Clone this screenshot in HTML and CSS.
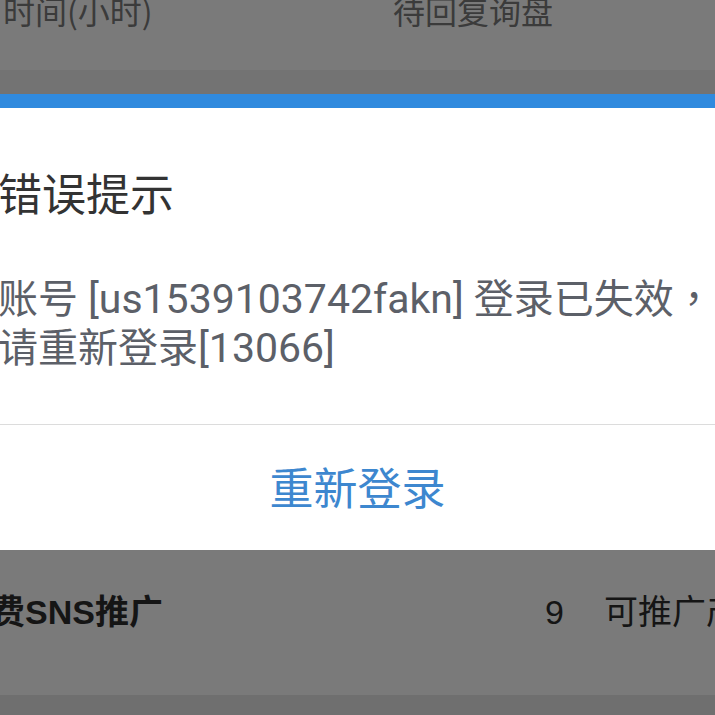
FILE: index.html
```html
<!DOCTYPE html>
<html lang="zh-CN">
<head>
    <meta charset="UTF-8">
    <meta name="viewport" content="width=device-width, initial-scale=1.0">
    <title>错误提示</title>
    <link rel="stylesheet" href="styles.css">
</head>
<body>
    <div class="table-head">
        <span class="head-col head-time">时间(小时)</span>
        <span class="head-col">待回复询盘</span>
    </div>
    <div class="head-shadow"></div>

    <div class="dialog">
        <div class="dialog-bar"></div>
        <div class="dialog-body">
            <h2 class="dialog-title">错误提示</h2>
            <p class="dialog-message">账号 <span class="code">[us1539103742fakn]</span> 登录已失效<span class="punct" lang="zh-TW">，</span>请重新登录<span class="code">[13066]</span></p>
        </div>
        <button class="dialog-action">重新登录</button>
    </div>

    <div class="stat-row">
        <span class="stat-name">费SNS推广</span>
        <span class="stat-count">9</span>
        <span class="stat-label">可推广产品</span>
    </div>
    <div class="stat-next"></div>
</body>
</html>
```

FILE: styles.css
```css
* {
    margin: 0;
    padding: 0;
    box-sizing: border-box;
}

:root {
    --overlay: #7a7a7a;
    --overlay-dark: #737373;
    --bar-blue: #308ade;
    --action-blue: #3d87cf;
    --title: #333333;
    --message: #5c6068;
}

body {
    width: 715px;
    height: 715px;
    overflow: hidden;
    background-color: var(--overlay);
    font-family: Roboto, "Noto Sans CJK SC", sans-serif;
}

.table-head {
    display: flex;
    height: 70px;
    color: #3b3b3b;
    font-family: "Noto Sans CJK SC", sans-serif;
    font-size: 32px;
    line-height: 30px;
    white-space: nowrap;
}

.head-col {
    margin-top: -5px;
}

.head-time {
    width: 393px;
    padding-left: 3px;
}

.head-shadow {
    height: 24px;
    background-color: var(--overlay-dark);
}

.dialog {
    background-color: #ffffff;
}

.dialog-bar {
    height: 14px;
    background-color: var(--bar-blue);
}

.dialog-body {
    width: 740px;
    margin-left: -2px;
    padding: 54px 0 51px;
    border-bottom: 1px solid #dcdcdc;
}

.dialog-title {
    font-family: "Noto Sans CJK SC", sans-serif;
    font-size: 44px;
    font-weight: 400;
    line-height: 60px;
    color: var(--title);
}

.dialog-message {
    margin-top: 53px;
    font-size: 40px;
    line-height: 49px;
    color: var(--message);
}

.code {
    font-size: 41px;
    line-height: 1;
}

.punct {
    font-family: "Noto Sans CJK TC", sans-serif;
    line-height: 1;
}

.dialog-action {
    display: block;
    width: 100%;
    height: 125px;
    padding-bottom: 4px;
    border: none;
    background: none;
    font-family: "Noto Sans CJK SC", sans-serif;
    font-size: 44px;
    color: var(--action-blue);
    text-align: center;
}

.stat-row {
    display: flex;
    height: 145px;
    margin-left: -9px;
    padding-top: 45px;
    font-family: "Liberation Sans", "Noto Sans CJK SC", sans-serif;
    font-size: 34px;
    line-height: 34px;
    color: #151515;
    white-space: nowrap;
}

.stat-name {
    width: 554px;
    flex-shrink: 0;
    font-weight: 700;
}

.stat-count {
    width: 59px;
    flex-shrink: 0;
}

.stat-next {
    height: 20px;
    background-color: #6f6f6f;
}
```
